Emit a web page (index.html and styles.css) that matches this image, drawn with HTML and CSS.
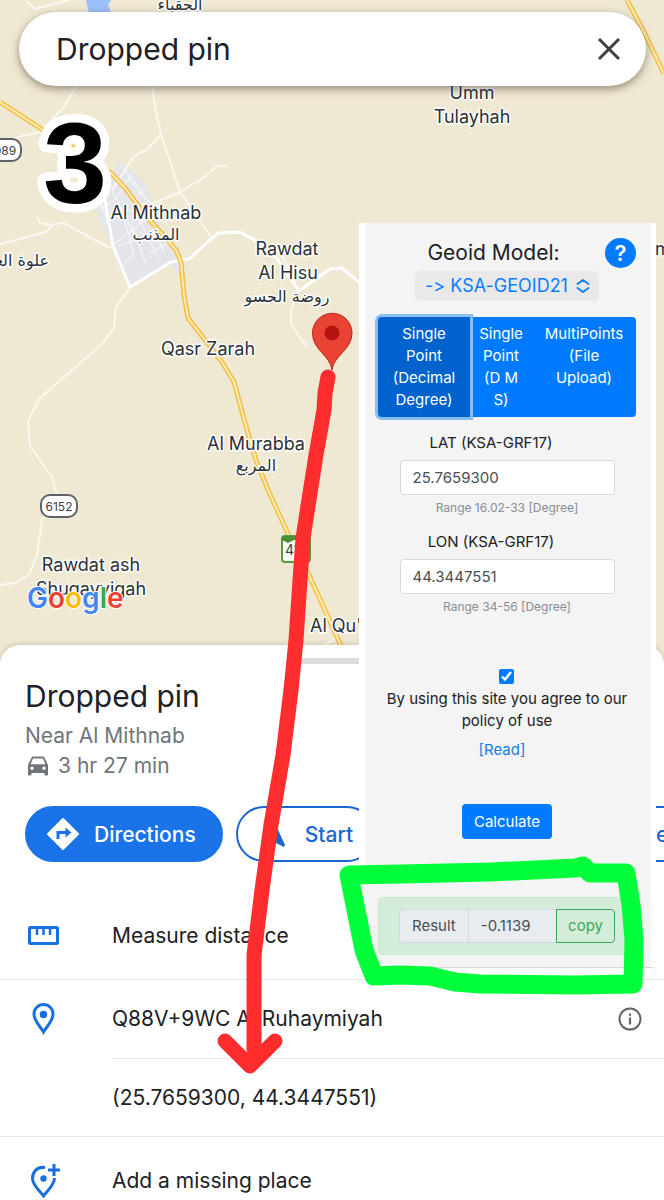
FILE: index.html
```html
<!DOCTYPE html>
<html lang="en">
<head>
<meta charset="utf-8">
<meta name="viewport" content="width=device-width, initial-scale=1">
<title>Dropped pin</title>
<link rel="stylesheet" href="styles.css">
</head>
<body>
<main class="screen">
  <section class="map" aria-label="Map">
    <svg class="map-canvas" width="664" height="670" viewBox="0 0 664 670">
      <path class="water" d="M86 0H111L108 5L111 13H89Z"/>
      <path class="town" d="M121 162L133 172L146 186L152 202L160 226L176 248L180 262L178 276L171 263L130 287L118 262L94 204L106 180Z"/>
      <g class="road">
        <path d="M26 1L35 9L70 0"/>
        <path d="M76 87L64 107L40 132L14 138"/>
        <path d="M152 87L156 112L161 134L180 192L211 237"/>
        <path d="M112 190L134 156L148 149L161 134"/>
        <path d="M150 205L180 192L203 178L217 166H227"/>
        <path d="M0 244L46 232L55 224L64 223L80 232L110 248"/>
        <path d="M37 217L40 223L52 225"/>
        <path d="M130 287L116 307L114 328L103 343L40 398L28 421L30 446L52 477L57 495L42 520L37 555L29 575L15 583L0 585"/>
        <path d="M278 246L298 290L291 310V324L300 338L308 347"/>
        <path d="M324 645L337 638"/>
      </g>
      <g class="street">
        <path d="M120 164L168 225M112 190L140 246M103 224L150 200M110 248L152 214M128 178L146 200M133 172L118 196M145 187L132 204M98 210L118 198M124 262L134 256L128 232L122 214M132 226L146 264M140 221L158 258M148 218L164 252M142 240L158 233M148 254L168 243M118 246L136 240M100 200L108 224"/>
      </g>
      <g class="road road-wide">
        <path d="M105 200L113 246L130 287L171 262L189 259L218 233L240 232L262 244L278 260L299 291"/>
        <path d="M299 291L330 269L342 268L360 283"/>
      </g>
      <g class="highway-edge">
        <path d="M0 102L43 130L100 164L113 175L125 188L140 208L152 223L166 238L176 250L181 262L184 295L188 318L205 340L222 362L234 382L247 430L256 460L268 490L290 538L310 577L342 648"/>
        <path d="M627 0L645 34L664 74"/>
      </g>
      <g class="highway-core">
        <path d="M0 102L43 130L100 164L113 175L125 188L140 208L152 223L166 238L176 250L181 262L184 295L188 318L205 340L222 362L234 382L247 430L256 460L268 490L290 538L310 577L342 648"/>
        <path d="M627 0L645 34L664 74"/>
      </g>
      <g class="shield">
        <rect x="-16" y="139" width="37" height="22" rx="9"/>
        <text x="5" y="155">089</text>
        <rect x="41" y="495" width="36" height="22" rx="9"/>
        <text x="59" y="511">6152</text>
      </g>
      <rect x="282" y="536" width="28" height="26" rx="3" fill="#fff" stroke="#5b9b3f" stroke-width="2"/>
      <path d="M282 536H310V540H294L288 543L282 540Z" fill="#4a9136"/>
      <text class="shield-text" x="285" y="555">41</text>
      <g class="place">
        <text x="472" y="99">Umm</text>
        <text x="472" y="123">Tulayhah</text>
        <text x="156" y="219">Al Mithnab</text>
        <text x="287" y="255">Rawdat</text>
        <text x="288" y="279">Al Hisu</text>
        <text x="208" y="355">Qasr Zarah</text>
        <text x="256" y="450">Al Murabba</text>
        <text x="91" y="571">Rawdat ash</text>
        <text x="91" y="595">Shuqayyiqah</text>
        <text class="place-start" x="310" y="632">Al Qu'</text>
        <text class="place-start" x="655" y="255">m</text>
      </g>
      <g class="place place-ar">
        <text x="180" y="10">الحقباء</text>
        <text x="156" y="240">المذنب</text>
        <text x="287" y="302">روضة الحسو</text>
        <text x="256" y="471">المربع</text>
        <text class="place-end" x="49" y="266">علوة العمر</text>
      </g>
      <text class="logo" x="27" y="608"><tspan fill="#4285f4">G</tspan><tspan fill="#ea4335">o</tspan><tspan fill="#fbbc05">o</tspan><tspan fill="#4285f4">g</tspan><tspan fill="#34a853">l</tspan><tspan fill="#ea4335">e</tspan></text>
      <path d="M332 370C330 355 312.500 350 312.500 333A19.500 19.500 0 0 1 352 333C352 350 334 355 332 370Z" fill="#ea4335" stroke="#b3281f"/>
      <circle cx="332" cy="333" r="7.500" fill="#b31412"/>
    </svg>
    <div class="search">
      <input class="search-field" type="text" value="Dropped pin" aria-label="Search">
      <button class="clear" type="button" aria-label="Clear">
        <svg width="24" height="24" viewBox="0 0 24 24"><path d="M2 2L22 22M22 2L2 22" stroke="#3c4043" stroke-width="3" fill="none"/></svg>
      </button>
    </div>
  </section>

  <section class="sheet">
    <div class="handle"></div>
    <h1 class="title">Dropped pin</h1>
    <p class="sub">Near Al Mithnab</p>
    <p class="sub drive">
      <svg width="22" height="20" viewBox="0 0 22 20"><path fill="#70757a" fill-rule="evenodd" d="M4.600 1.500Q5 .5 6 .5H16Q17 .5 17.400 1.500L21 9V18.500Q21 19.500 20 19.500H18.500Q17.500 19.500 17.500 18.500V17H4.500V18.500Q4.500 19.500 3.500 19.500H2Q1 19.500 1 18.500V9ZM6 2.500L3.600 8.300H18.400L16 2.500ZM5 10.500A1.700 1.700 0 1 0 5 13.900A1.700 1.700 0 1 0 5 10.500ZM17 10.500A1.700 1.700 0 1 0 17 13.900A1.700 1.700 0 1 0 17 10.500Z"/></svg>
      3 hr 27 min
    </p>
    <div class="actions">
      <button class="action action-main" type="button">
        <svg width="32" height="32" viewBox="0 0 32 32"><path d="M16 1L31 16L16 31L1 16Z" fill="#fff" stroke="#fff" stroke-width="2" stroke-linejoin="round"/><path d="M11 21V14.500H20" fill="none" stroke="#1a73e8" stroke-width="3"/><path d="M18.500 9.500L24.500 14.500L18.500 19.500Z" fill="#1a73e8"/></svg>
        Directions
      </button>
      <button class="action" type="button">
        <svg width="32" height="32" viewBox="0 0 32 32"><path d="M16 3L27 27L26 29L16 24L6 29L5 27Z" fill="#1967d2"/></svg>
        Start
      </button>
      <button class="action" type="button">
        <svg width="32" height="32" viewBox="0 0 32 32"><path d="M9 5H23V27L16 23L9 27Z" fill="none" stroke="#1967d2" stroke-width="3"/></svg>
        Save
      </button>
      <button class="action" type="button">
        <svg width="32" height="32" viewBox="0 0 32 32"><path d="M16 21V5M10 11L16 5L22 11M7 17V27H25V17" fill="none" stroke="#1967d2" stroke-width="3"/></svg>
        Share
      </button>
    </div>
    <ul class="rows">
      <li class="row row-first">
        <span class="row-icon"><svg width="32" height="20" viewBox="0 0 32 20"><rect x="1.500" y="1.500" width="28" height="16" rx="1" fill="none" stroke="#1a6fe0" stroke-width="3"/><path d="M9 2V9M15.500 2V9M22 2V9" stroke="#1a6fe0" stroke-width="2.500"/></svg></span>
        <span class="row-text">Measure distance</span>
      </li>
      <li class="row">
        <span class="row-icon"><svg width="32" height="32" viewBox="0 0 32 32"><path d="M15.500 29C12 23 6 18 6 11A9.500 9.500 0 0 1 25 11C25 18 19 23 15.500 29Z" fill="none" stroke="#1a6fe0" stroke-width="3"/><circle cx="15.500" cy="11.500" r="3.800" fill="#1a6fe0"/></svg></span>
        <span class="row-text">Q88V+9WC Al Ruhaymiyah</span>
        <button class="info" type="button" aria-label="More information"><svg width="24" height="24" viewBox="0 0 24 24"><circle cx="12" cy="12" r="10.500" fill="none" stroke="#5f6368" stroke-width="2"/><path d="M12 10.500V17.500M12 6.500V8.700" stroke="#5f6368" stroke-width="2.200"/></svg></button>
      </li>
      <li class="row row-inset"><span class="row-text">(25.7659300, 44.3447551)</span></li>
      <li class="row row-last">
        <span class="row-icon"><svg width="32" height="34" viewBox="0 0 32 34"><path d="M17 3.500C9 2.500 4.500 8 4.500 14.500C4.500 21 11 26 15.500 32C20 26 26.500 21 26.500 14" fill="none" stroke="#1a6fe0" stroke-width="3"/><circle cx="15.500" cy="14.500" r="3.200" fill="#1a6fe0"/><path d="M26 0V12M20 6H32" stroke="#1a6fe0" stroke-width="3"/></svg></span>
        <span class="row-text">Add a missing place</span>
      </li>
    </ul>
  </section>

  <form class="panel">
    <div class="panel-head">
      <label class="panel-title" for="model">Geoid Model:</label>
      <button class="help" type="button" aria-label="Help">?</button>
    </div>
    <div class="model">
      <select class="model-select" id="model"><option>-&gt; KSA-GEOID21</option></select>
      <svg class="model-arrows" width="14" height="14" viewBox="0 0 14 14"><path d="M1.500 5L7 1L12.500 5M1.500 9L7 13L12.500 9" fill="none" stroke="#0a7cff" stroke-width="1.800" stroke-linecap="round" stroke-linejoin="round"/></svg>
    </div>
    <div class="tabs">
      <button class="tab tab-active" type="button"><span>Single Point (Decimal Degree)</span></button>
      <button class="tab" type="button"><span>Single<br>Point<br>(D M<br>S)</span></button>
      <button class="tab" type="button"><span>MultiPoints<br>(File<br>Upload)</span></button>
    </div>
    <div class="field">
      <label class="field-label" for="lat">LAT (KSA-GRF17)</label>
      <input class="field-input" id="lat" type="text" value="25.7659300">
      <small class="hint">Range 16.02-33 [Degree]</small>
    </div>
    <div class="field">
      <label class="field-label" for="lon">LON (KSA-GRF17)</label>
      <input class="field-input" id="lon" type="text" value="44.3447551">
      <small class="hint">Range 34-56 [Degree]</small>
    </div>
    <div class="agree">
      <input class="agree-box" id="agree" type="checkbox" checked>
      <label for="agree">By using this site you agree to our<br>policy of use</label>
    </div>
    <a class="read" href="#policy">[Read]</a>
    <button class="calculate" type="button">Calculate</button>
    <div class="result">
      <label class="result-label" for="result">Result</label>
      <input class="result-value" id="result" type="text" value="-0.1139" readonly>
      <button class="copy" type="button">copy</button>
    </div>
  </form>

  <svg class="marks" width="664" height="1200" viewBox="0 0 664 1200" aria-label="3">
    <text class="step" x="43" y="203">3</text>
    <path d="M328 377L325 393L324 410L316 455L303 538L300 580L296 640L291 690L283 755L271 825L262 890L254 955V1050" stroke="#ff2d2d" stroke-width="15"/>
    <path d="M225 1041L250 1066L275 1041" stroke="#ff2d2d" stroke-width="15"/>
    <path d="M349 875L400 874L490 872L576 868L583 866L590 873H626L631 905L634 940L633 984L575 985L480 984L455 982L430 976L400 975L374 976L364 950L357 915Z" stroke="#00ff3a" stroke-width="19"/>
    <path d="M574 864L584 861" stroke="#00ff3a" stroke-width="8"/>
  </svg>
</main>
</body>
</html>
```
FILE: styles.css
```css
* { box-sizing: border-box; }
body {
  margin: 0;
  font-family: Inter, "Noto Sans", sans-serif;
  color: #202124;
  background: #fff;
}
button, input, select { font: inherit; color: inherit; margin: 0; }
button { border: 0; padding: 0; background: none; }

.screen { position: relative; min-height: 100vh; overflow: hidden; }

/* Map */
.map { position: relative; height: 670px; background: #efe8d3; }
.map-canvas { display: block; }
.water { fill: #9cc0f9; }
.town { fill: #e4e5ea; }
.road { fill: none; stroke: #fbf8f0; stroke-width: 2; stroke-linejoin: round; }
.road-wide { stroke: #fff; stroke-width: 3; }
.street { fill: none; stroke: #fafbfc; stroke-width: 1; }
.highway-edge { fill: none; stroke: #f2bf45; stroke-width: 5; stroke-linejoin: round; }
.highway-core { fill: none; stroke: #fdebb0; stroke-width: 2; stroke-linejoin: round; }
.place {
  font-size: 18px;
  text-anchor: middle;
  fill: #2d3135;
  stroke: #fff;
  stroke-width: 3px;
  stroke-linejoin: round;
  paint-order: stroke;
}
.place-ar { font-family: "DejaVu Sans", sans-serif; font-size: 16px; }
.place-start { text-anchor: start; }
.place-end { text-anchor: end; }
.shield rect { fill: #fff; stroke: #5f6368; stroke-width: 2; }
.shield text { font-size: 12px; text-anchor: middle; fill: #3c4043; }
.shield-text { font-size: 14px; fill: #3c4043; }
.logo {
  font-size: 28px;
  font-weight: 600;
  stroke: #fff;
  stroke-width: 2px;
  stroke-linejoin: round;
  paint-order: stroke;
}

.search {
  position: absolute;
  top: 12px;
  left: 19px;
  right: 18px;
  display: flex;
  align-items: center;
  height: 74px;
  padding: 0 24px 0 37px;
  border-radius: 37px;
  background: #fff;
  box-shadow: 0 3px 8px rgba(60, 50, 30, .5);
}
.search-field {
  flex: 1;
  min-width: 0;
  padding: 0;
  border: 0;
  outline: 0;
  background: none;
  font-size: 30px;
}
.clear { display: flex; padding: 1px; }

/* Place sheet */
.sheet {
  position: relative;
  margin-top: -25px;
  padding-top: 13px;
  border-radius: 20px 20px 0 0;
  background: #fff;
  box-shadow: 0 -1px 5px rgba(60, 50, 30, .2);
}
.handle { width: 64px; height: 6px; margin: 0 auto; border-radius: 3px; background: #dadce0; }
.title { margin: 12px 25px 0; font-size: 30px; line-height: 40px; font-weight: 400; }
.sub { margin: 5px 25px 0; font-size: 21px; line-height: 30px; color: #70757a; }
.drive { display: flex; align-items: center; gap: 9px; margin: 0 27px; }
.actions { display: flex; gap: 13px; margin: 25px 0 30px 25px; }
.action {
  flex: none;
  display: flex;
  align-items: center;
  gap: 15px;
  height: 56px;
  padding: 0 20px;
  border: 2px solid #1967d2;
  border-radius: 28px;
  font-size: 21px;
  font-weight: 500;
  color: #1967d2;
}
.action-main { padding-right: 25px; border-color: #1a73e8; background: #1a73e8; color: #fff; }
.rows { list-style: none; margin: 0; padding: 0; }
.row { display: flex; align-items: center; height: 78px; padding-right: 22px; }
.row-first { height: 88px; border-bottom: 1px solid #e4e6e9; }
.row-icon { display: flex; width: 112px; padding-left: 28px; }
.row-text { flex: 1; font-size: 21px; line-height: 26px; }
.row-inset { margin-left: 112px; border-top: 1px solid #e4e6e9; }
.row-last { height: 88px; border-top: 1px solid #e4e6e9; margin-bottom: -24px; }
.info { display: flex; }

/* Geoid calculator */
.panel {
  position: absolute;
  top: 223px;
  left: 359px;
  right: 8px;
  display: flex;
  flex-direction: column;
  align-items: center;
  padding: 14px 15px 12px 13px;
  border: solid #fff;
  border-width: 0 5px 0 6px;
  border-bottom: 1px solid #d5d7dd;
  background: #f4f4f4;
  font-size: 15px;
  line-height: 22px;
}
.panel-head { align-self: stretch; display: flex; align-items: center; height: 31px; }
.panel-title { flex: 1; padding-left: 4px; text-align: center; font-size: 21px; }
.help {
  width: 31px;
  height: 30px;
  border-radius: 50%;
  background: #007bff;
  color: #fff;
  font-size: 22px;
  font-weight: 600;
  line-height: 30px;
}
.model { position: relative; margin-top: 3px; }
.model-select {
  appearance: none;
  height: 30px;
  width: 184px;
  padding: 0 10px;
  border: 0;
  border-radius: 5px;
  background: #e9e9e9;
  color: #0a7cff;
  font-size: 18px;
  font-feature-settings: "calt" 0, "liga" 0;
}
.model-arrows { position: absolute; top: 8px; right: 9px; }
.tabs {
  align-self: stretch;
  display: grid;
  grid-template-columns: 92fr 62fr 104fr;
  margin-top: 16px;
  border-radius: 4px;
  background: #007bff;
  color: #fff;
}
.tab { display: flex; align-items: flex-start; justify-content: center; padding: 6px 4px; min-width: 0; }
.tab-active { padding: 6px 12px; border-radius: 4px 0 0 4px; background: #0062cc; box-shadow: 0 0 0 3px #86bdfb; }
.field { display: flex; flex-direction: column; align-items: center; width: 215px; margin-top: 15px; }
.field + .field { margin-top: 12px; }
.field-label { padding-right: 32px; }
.field-input {
  width: 100%;
  height: 35px;
  margin-top: 6px;
  padding: 0 12px;
  border: 1px solid #d6d9de;
  border-radius: 4px;
  background: #fff;
  color: #495057;
}
.hint { margin-top: 2px; font-size: 12px; color: #868e96; }
.agree { display: flex; flex-direction: column; align-items: center; margin-top: 51px; text-align: center; }
.agree-box { width: 15px; height: 15px; margin-bottom: 4px; accent-color: #007bff; }
.read { margin-top: 7px; padding-right: 10px; color: #1a7ae0; text-decoration: none; }
.calculate { height: 35px; margin-top: 43px; padding: 0 12px; border-radius: 4px; background: #007bff; color: #fff; }
.result {
  align-self: stretch;
  display: flex;
  margin-top: 58px;
  padding: 11px 20px;
  border: 1px solid #c9e8d0;
  border-radius: 4px;
  background: #d4edda;
}
.result-label, .result-value { border: 1px solid #d3d8de; background: #e9ecef; color: #495057; }
.result-label { padding: 5px 12px; border-radius: 4px 0 0 4px; }
.result-value { flex: 1; min-width: 0; padding: 0 12px; border-left: 0; border-right: 0; }
.copy { padding: 0 11px; border: 1px solid #3fa55a; border-radius: 0 4px 4px 0; color: #3fa55a; }

/* Hand-drawn marks */
.marks { position: absolute; top: 0; left: 0; pointer-events: none; fill: none; stroke-linecap: round; stroke-linejoin: round; }
.step {
  font-family: "Liberation Sans", sans-serif;
  font-size: 115px;
  font-weight: 700;
  fill: #000;
  stroke: #fff;
  stroke-width: 17px;
  paint-order: stroke;
}
```
